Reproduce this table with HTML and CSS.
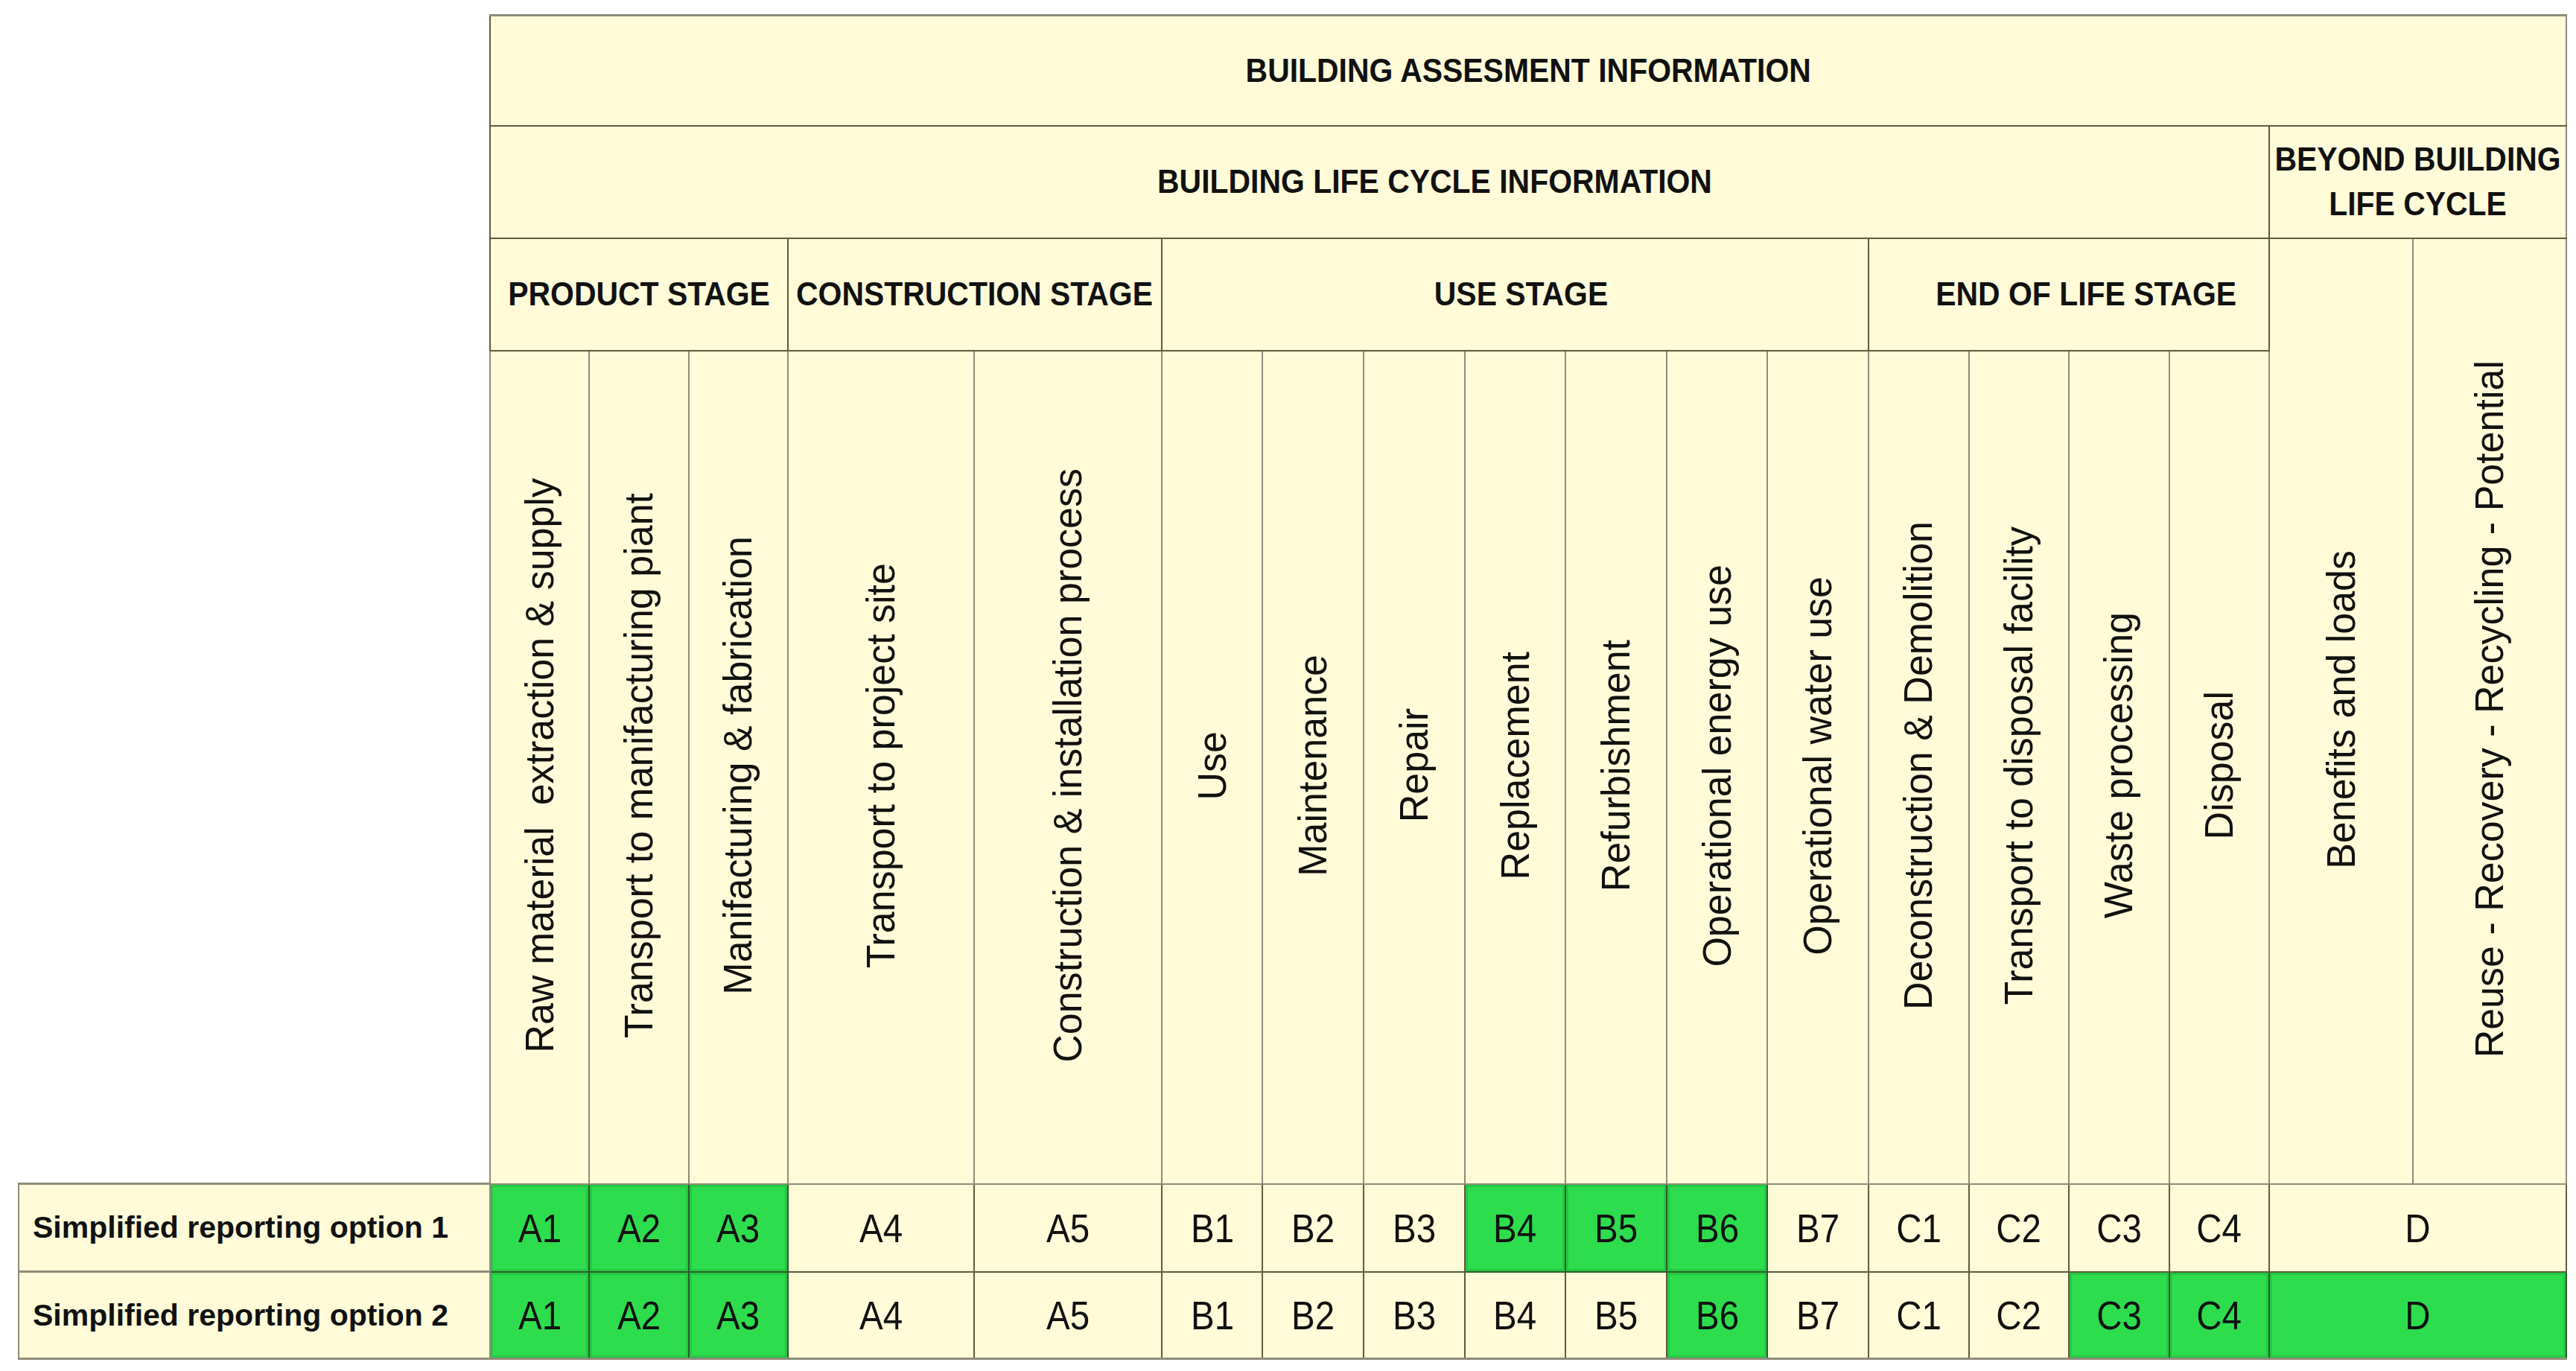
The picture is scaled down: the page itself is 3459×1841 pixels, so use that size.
FILE: index.html
```html
<!DOCTYPE html>
<html>
  <head>
    <title>Building assessment information</title>
    <link rel="stylesheet" href="styles.css">
  </head>
  <body>
    <table class="lca">
      <colgroup>
        <col class="col-label">
        <col class="col-a"><col class="col-a"><col class="col-a">
        <col class="col-a4"><col class="col-a5">
        <col class="col-b"><col class="col-b"><col class="col-b"><col class="col-b"><col class="col-b"><col class="col-b"><col class="col-b">
        <col class="col-c"><col class="col-c"><col class="col-c"><col class="col-c">
        <col class="col-d1"><col class="col-d2">
      </colgroup>

      <tr class="row-top">
        <td class="blank" rowspan="4"></td>
        <th colspan="18" class="head-main"><span class="htext">BUILDING ASSESMENT INFORMATION</span></th>
      </tr>
      <tr class="row-cycle">
        <th colspan="16" class="head-cycle"><span class="htext">BUILDING LIFE CYCLE INFORMATION</span></th>
        <th colspan="2" class="head-beyond"><span class="htext">BEYOND BUILDING<br>LIFE CYCLE</span></th>
      </tr>
      <tr class="row-stage">
        <th colspan="3"><span class="htext">PRODUCT STAGE</span></th>
        <th colspan="2"><span class="htext">CONSTRUCTION STAGE</span></th>
        <th colspan="7" class="head-use"><span class="htext">USE STAGE</span></th>
        <th colspan="4" class="head-end"><span class="htext">END OF LIFE STAGE</span></th>
        <td rowspan="2" class="module"><span class="vtext">Benefits and loads</span></td>
        <td rowspan="2" class="module"><span class="vtext">Reuse - Recovery - Recycling - Potential</span></td>
      </tr>
      <tr class="row-modules">
        <td class="module"><span class="vtext">Raw material&nbsp; extraction &amp; supply</span></td>
        <td class="module"><span class="vtext">Transport to manifacturing piant</span></td>
        <td class="module"><span class="vtext">Manifacturing &amp; fabrication</span></td>
        <td class="module"><span class="vtext">Transport to project site</span></td>
        <td class="module"><span class="vtext">Construction &amp; installation process</span></td>
        <td class="module"><span class="vtext">Use</span></td>
        <td class="module"><span class="vtext">Maintenance</span></td>
        <td class="module"><span class="vtext">Repair</span></td>
        <td class="module"><span class="vtext">Replacement</span></td>
        <td class="module"><span class="vtext">Refurbishment</span></td>
        <td class="module"><span class="vtext">Operational energy use</span></td>
        <td class="module"><span class="vtext">Operational water use</span></td>
        <td class="module"><span class="vtext">Deconstruction &amp; Demolition</span></td>
        <td class="module"><span class="vtext">Transport to disposal facility</span></td>
        <td class="module"><span class="vtext">Waste processing</span></td>
        <td class="module"><span class="vtext">Disposal</span></td>
      </tr>

      <tr class="row-option">
        <th class="option">Simplified reporting option 1</th>
        <td class="code on"><span>A1</span></td>
        <td class="code on"><span>A2</span></td>
        <td class="code on"><span>A3</span></td>
        <td class="code"><span>A4</span></td>
        <td class="code"><span>A5</span></td>
        <td class="code"><span>B1</span></td>
        <td class="code"><span>B2</span></td>
        <td class="code"><span>B3</span></td>
        <td class="code on"><span>B4</span></td>
        <td class="code on"><span>B5</span></td>
        <td class="code on"><span>B6</span></td>
        <td class="code"><span>B7</span></td>
        <td class="code"><span>C1</span></td>
        <td class="code"><span>C2</span></td>
        <td class="code"><span>C3</span></td>
        <td class="code"><span>C4</span></td>
        <td class="code" colspan="2"><span>D</span></td>
      </tr>
      <tr class="row-option last">
        <th class="option">Simplified reporting option 2</th>
        <td class="code on"><span>A1</span></td>
        <td class="code on"><span>A2</span></td>
        <td class="code on"><span>A3</span></td>
        <td class="code"><span>A4</span></td>
        <td class="code"><span>A5</span></td>
        <td class="code"><span>B1</span></td>
        <td class="code"><span>B2</span></td>
        <td class="code"><span>B3</span></td>
        <td class="code"><span>B4</span></td>
        <td class="code"><span>B5</span></td>
        <td class="code on"><span>B6</span></td>
        <td class="code"><span>B7</span></td>
        <td class="code"><span>C1</span></td>
        <td class="code"><span>C2</span></td>
        <td class="code on"><span>C3</span></td>
        <td class="code on"><span>C4</span></td>
        <td class="code on" colspan="2"><span>D</span></td>
      </tr>
    </table>
  </body>
</html>
```

FILE: styles.css
```css
:root {
  --cream: #fffbd9;
  --green: #2ddd4e;
  --green-dark: #24c843;
  --line: #5e5b3e;
  --line-light: #8d8b78;
  --text: #111111;
}

* {
  margin: 0;
  padding: 0;
  box-sizing: border-box;
}

body {
  background: #ffffff;
  padding: 19px 0 0 24px;
  font-family: "Liberation Sans", Arial, Helvetica, sans-serif;
  color: var(--text);
}

.lca {
  table-layout: fixed;
  width: 3421px;
  border-collapse: collapse;
}

.col-label { width: 633px; }
.col-a { width: 133.3px; }
.col-a4 { width: 250px; }
.col-a5 { width: 252px; }
.col-b { width: 135.6px; }
.col-c { width: 134.5px; }
.col-d1 { width: 193px; }
.col-d2 { width: 206px; }

.row-top { height: 148px; }
.row-cycle { height: 151px; }
.row-stage { height: 151px; }
.row-modules { height: 1119px; }
.row-option { height: 118px; }
.row-option.last { height: 117px; }

th,
td {
  background: var(--cream);
  border: 2px solid var(--line);
  padding: 0;
  text-align: center;
  vertical-align: middle;
}

td.blank {
  background: transparent;
  border: none;
}

th {
  font-size: 41px;
  font-weight: bold;
  white-space: nowrap;
}

/* glyphs in the source are a little taller than they are wide */
.htext {
  display: inline-block;
  font-size: 44px;
  margin: 0 -20px;
  transform: scaleX(0.93);
}

.head-main {
  border-top: 3px solid var(--line-light);
  border-right-color: var(--line-light);
}

.head-cycle {
  padding-left: 148px;
}

.head-beyond {
  line-height: 60px;
  border-right-color: var(--line-light);
}

.head-use {
  padding-left: 16px;
}

.head-end {
  padding-left: 46px;
}

.module {
  border-color: var(--line-light);
  border-top-color: var(--line);
}

.vtext {
  display: inline-block;
  writing-mode: vertical-rl;
  transform: rotate(180deg) scaleX(1.03);
  white-space: nowrap;
  font-size: 52px;
  line-height: 1.15;
}

th.option {
  font-size: 41px;
  text-align: left;
  padding-left: 18px;
  border-color: var(--line-light);
  border-top: 3px solid var(--line-light);
}

.code span {
  display: inline-block;
  font-size: 54px;
  transform: scaleX(0.88);
}

.code.on {
  background: var(--green);
  box-shadow: inset 0 0 0 3px var(--green-dark);
  border-color: #2f5a2c;
}

.row-option.last td,
.row-option.last th {
  border-bottom: 3px solid var(--line-light);
}
```
